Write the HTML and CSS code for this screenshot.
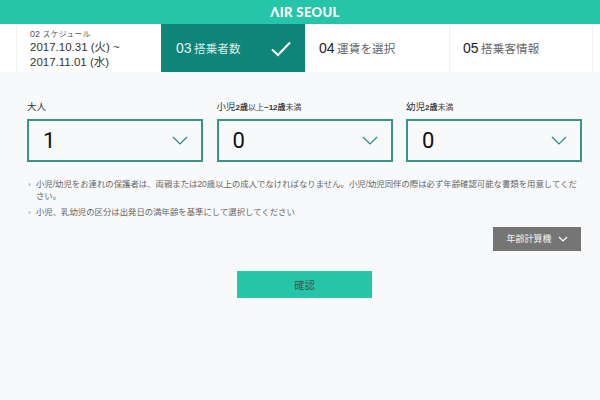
FILE: index.html
```html
<!DOCTYPE html>
<html lang="ja">
<head>
<meta charset="utf-8">
<title>AIR SEOUL</title>
<link rel="stylesheet" href="styles.css">
</head>
<body>
<header class="topbar"><span class="logo">ΛIR SEOUL</span></header>
<nav class="steps">
  <div class="step step-schedule">
    <div class="sched-title"><span class="sched-num">02</span> スケジュール</div>
    <div class="sched-date">2017.10.31 (火) ~</div>
    <div class="sched-date">2017.11.01 (水)</div>
  </div>
  <div class="step step-active">
    <span class="step-label"><span class="num">03</span> 搭乗者数</span>
    <svg class="check" width="22" height="16" viewBox="0 0 22 16"><path d="M2 8.5 L8 14 L20 1.5" fill="none" stroke="#fff" stroke-width="2"/></svg>
  </div>
  <div class="step"><span class="step-label"><span class="num">04</span> <span class="jp">運賃を選択</span></span></div>
  <div class="step step-last"><span class="step-label"><span class="num">05</span> <span class="jp">搭乗客情報</span></span></div>
</nav>
<main class="content">
  <section class="fields">
    <div class="field">
      <div class="field-label">大人</div>
      <div class="select"><span class="value">1</span>
        <svg class="chev" width="16" height="9" viewBox="0 0 16 9"><path d="M1 1 L8 8 L15 1" fill="none" stroke="#1f8a7e" stroke-width="1.2"/></svg></div>
    </div>
    <div class="field">
      <div class="field-label">小児<b>2歳</b><small>以上</small><b>~12歳</b><small>未満</small></div>
      <div class="select"><span class="value">0</span>
        <svg class="chev" width="16" height="9" viewBox="0 0 16 9"><path d="M1 1 L8 8 L15 1" fill="none" stroke="#1f8a7e" stroke-width="1.2"/></svg></div>
    </div>
    <div class="field">
      <div class="field-label">幼児<b>2歳</b><small>未満</small></div>
      <div class="select"><span class="value">0</span>
        <svg class="chev" width="16" height="9" viewBox="0 0 16 9"><path d="M1 1 L8 8 L15 1" fill="none" stroke="#1f8a7e" stroke-width="1.2"/></svg></div>
    </div>
  </section>
  <ul class="notes">
    <li>小児/幼児をお連れの保護者は、両親または20歳以上の成人でなければなりません。小児/幼児同伴の際は必ず年齢確認可能な書類を用意してください。</li>
    <li>小児、乳幼児の区分は出発日の満年齢を基準にして選択してください</li>
  </ul>
  <div class="calc-row">
    <div class="calc">年齢計算機
      <svg width="10" height="6" viewBox="0 0 10 6"><path d="M1 1 L5 5 L9 1" fill="none" stroke="#fff" stroke-width="1.2"/></svg>
    </div>
  </div>
  <div class="confirm-row"><div class="confirm">確認</div></div>
</main>
</body>
</html>
```
FILE: styles.css
```css
* { box-sizing: border-box; }
html, body { margin: 0; padding: 0; }
body {
  width: 600px;
  height: 400px;
  overflow: hidden;
  background: #f7f9fb;
  font-family: "Liberation Sans", "Noto Sans CJK JP", sans-serif;
  color: #333;
}
.topbar {
  height: 24px;
  background: #26c4a8;
  display: flex;
  align-items: center;
  justify-content: center;
  padding-left: 10px;
}
.logo {
  font-family: Lato, sans-serif;
  font-weight: 900;
  font-size: 13px;
  letter-spacing: 0.4px;
  color: #fff;
}
.steps {
  height: 48px;
  background: #fff;
  padding-left: 16px;
  display: grid;
  grid-template-columns: 145px 144px 144px 144px;
  width: 100%;
}
.step {
  border-left: 1px solid #eef0f1;
  display: flex;
  align-items: center;
  padding-left: 13px;
  color: #555;
}
.step-last { border-right: 1px solid #eef0f1; }
.step-schedule {
  flex-direction: column;
  align-items: flex-start;
  justify-content: center;
  padding-left: 13px;
  color: #333;
}
.sched-title { font-size: 7.5px; line-height: 10px; letter-spacing: 0.6px; color: #555; margin-top: 2px; }
.sched-num { font-size: 9px; letter-spacing: 0; }
.sched-date { font-size: 11.5px; line-height: 14.5px; margin-top: 0.5px; color: #333; }
.step-active {
  background: #0f8478;
  border-left: 0;
  justify-content: space-between;
  padding: 0 13px 0 15px;
}
.step-label { font-size: 11.5px; letter-spacing: 0.2px; word-spacing: -1px; }
.num { font-size: 14px; color: #222; letter-spacing: 0; }
.step-active .num { color: #e8f6f3; }
.step-active .step-label { color: #d6eeea; }
.jp { color: #666; }
.check { margin-top: 2px; }
.content { padding: 0 18px 0 27px; }
.fields {
  display: grid;
  grid-template-columns: 176px 176px 176px;
  column-gap: 13.5px;
  padding-top: 29px;
}
.field-label {
  font-size: 9.5px;
  line-height: 12px;
  height: 18px;
  color: #333;
  white-space: nowrap;
}
.field-label b { font-size: 8px; font-weight: 700; }
.field-label small { font-size: 8px; color: #444; }
.select {
  height: 43px;
  border: 2px solid #3a9589;
  display: flex;
  align-items: center;
  justify-content: space-between;
  padding: 0 13px 0 14px;
}
.value { font-family: Roboto, sans-serif; font-weight: 400; font-size: 22px; color: #111; }
.notes {
  list-style: none;
  margin: 16px 0 0;
  padding: 0;
  width: 555px;
}
.notes li {
  position: relative;
  padding-left: 9px;
  font-size: 8.4px;
  line-height: 12px;
  margin-bottom: 3.5px;
  color: #666;
}
.notes li::before {
  content: "";
  position: absolute;
  left: 1px;
  top: 5px;
  width: 3px;
  height: 3px;
  background: #ccd0d0;
  border-radius: 50%;
}
.calc-row { display: flex; justify-content: flex-end; margin-top: 9px; padding-right: 1px; }
.calc {
  width: 88px;
  height: 24px;
  background: #757575;
  color: #f2f2f2;
  font-size: 9px;
  display: flex;
  align-items: center;
  justify-content: center;
  gap: 6px;
}
.confirm-row { display: flex; justify-content: flex-start; margin-top: 20px; padding-left: 210px; }
.confirm {
  width: 135px;
  height: 27px;
  background: #26c4a8;
  color: #3f5a55;
  font-size: 10.5px;
  display: flex;
  align-items: center;
  justify-content: center;
}
```
